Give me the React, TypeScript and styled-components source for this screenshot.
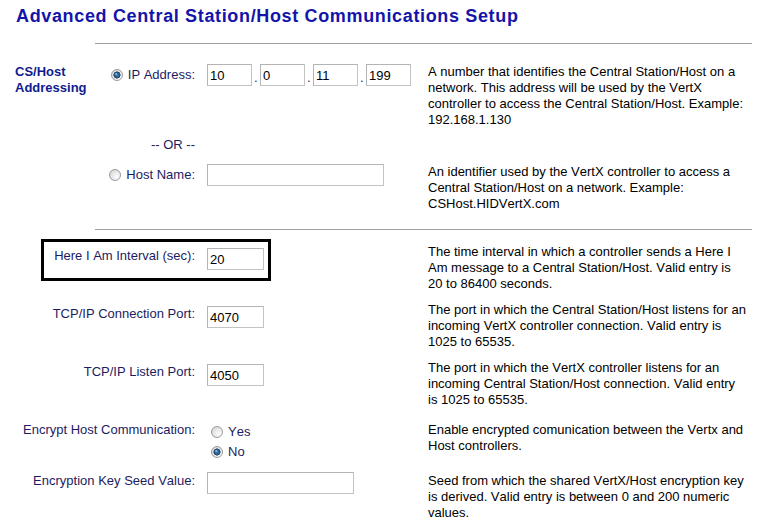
import React from "react";
import styled, { createGlobalStyle } from "styled-components";

const navy = "#1c1c62";

const GlobalStyle = createGlobalStyle`
  body {
    margin: 0;
    background: #fff;
    font-family: "Liberation Sans", Arial, sans-serif;
    font-size: 13px;
    line-height: 16px;
    font-kerning: none;
    color: #000;
  }
`;

const Page = styled.div`
  width: 762px;
  box-sizing: border-box;
  padding: 5px 10px 0 15px;
`;

const Title = styled.h1`
  margin: 0 0 0 1px;
  font-size: 18px;
  line-height: 22px;
  font-weight: bold;
  letter-spacing: 0.65px;
  color: #1414aa;
`;

const Rule = styled.hr<{ $top: number }>`
  margin: ${(p) => p.$top}px 0 0 80px;
  border: 0;
  height: 1px;
  background: #a0a0a0;
`;

const Row = styled.div<{ $top: number }>`
  position: relative;
  display: grid;
  grid-template-columns: 192px 221px 319px;
  align-items: start;
  margin-top: ${(p) => p.$top}px;
`;

const LabelCell = styled.div<{ $pad?: number; $split?: boolean }>`
  display: flex;
  justify-content: ${(p) => (p.$split ? "space-between" : "flex-end")};
  align-items: flex-start;
  padding: ${(p) => p.$pad ?? 0}px 12px 0 0;
  color: ${navy};
  white-space: nowrap;
`;

const SectionHeading = styled.div`
  font-weight: bold;
  color: #0f1c8e;
  white-space: normal;
  width: 80px;
`;

const RadioLabel = styled.label`
  display: flex;
  align-items: center;
  gap: 5px;
  height: 22px;
  line-height: 20px;
  color: ${navy};
`;

const ControlCell = styled.div<{ $pad?: number }>`
  display: flex;
  flex-direction: column;
  align-items: flex-start;
  padding-top: ${(p) => p.$pad ?? 0}px;
`;

const IpGroup = styled.div`
  display: flex;
  align-items: flex-end;
`;

const Dot = styled.span`
  width: 8px;
  padding-left: 2px;
  box-sizing: border-box;
  line-height: 16px;
  color: ${navy};
`;

const TextBox = styled.input<{ $w: number }>`
  width: ${(p) => p.$w}px;
  height: 22px;
  box-sizing: border-box;
  margin: 0;
  padding: 0 2px;
  border: 1px solid #c3c3c3;
  border-top-color: #b4b4b4;
  border-left-color: #b4b4b4;
  background: #fff;
  font-family: "Liberation Sans", Arial, sans-serif;
  font-size: 13px;
  color: #000;
  outline: none;
`;

const Radio = styled.input`
  appearance: none;
  width: 12px;
  height: 12px;
  margin: 0;
  border-radius: 50%;
  border: 1px solid #9a9a9a;
  box-sizing: border-box;
  background: radial-gradient(circle at 70% 70%, #ffffff 0, #ececec 40%, #cfcfcf 100%);
  flex: none;

  &:checked {
    background:
      radial-gradient(circle at 42% 40%, #c8ecff 0, rgba(200, 236, 255, 0) 1.4px),
      radial-gradient(circle at 50% 50%, #3f86bd 0, #24598a 2.4px, #1b3f66 3.3px, rgba(27, 63, 102, 0) 3.8px),
      radial-gradient(circle at 70% 70%, #ffffff 0, #ececec 40%, #cfcfcf 100%);
  }
`;

const Option = styled.label`
  display: flex;
  align-items: center;
  gap: 5px;
  height: 20px;
  line-height: 20px;
  margin-left: 4px;
  color: ${navy};
`;

const DescCell = styled.div<{ $pad?: number }>`
  padding-top: ${(p) => p.$pad ?? 0}px;
  color: #000;
`;

const Highlight = styled.div`
  position: absolute;
  left: 26px;
  top: -5px;
  width: 230px;
  height: 42px;
  box-sizing: border-box;
  border: 3px solid #000;
  pointer-events: none;
`;

type FieldRow = {
  top: number;
  label: string;
  value: string;
  width: number;
  labelPad: number;
  controlPad: number;
  descPad: number;
  desc: string;
  boxed?: boolean;
};

const fieldRows: FieldRow[] = [
  {
    top: 14,
    label: "Here I Am Interval (sec):",
    value: "20",
    width: 57,
    labelPad: 4,
    controlPad: 4,
    descPad: 0,
    desc: "The time interval in which a controller sends a Here I Am message to a Central Station/Host. Valid entry is 20 to 86400 seconds.",
    boxed: true,
  },
  {
    top: 10,
    label: "TCP/IP Connection Port:",
    value: "4070",
    width: 57,
    labelPad: 4,
    controlPad: 4,
    descPad: 0,
    desc: "The port in which the Central Station/Host listens for an incoming VertX controller connection. Valid entry is 1025 to 65535.",
  },
  {
    top: 10,
    label: "TCP/IP Listen Port:",
    value: "4050",
    width: 57,
    labelPad: 4,
    controlPad: 4,
    descPad: 0,
    desc: "The port in which the VertX controller listens for an incoming Central Station/Host connection. Valid entry is 1025 to 65535.",
  },
];

export default function App() {
  const ip = ["10", "0", "11", "199"];

  return (
    <>
      <GlobalStyle />
      <Page>
        <Title>Advanced Central Station/Host Communications Setup</Title>
        <Rule $top={16} />

        <Row $top={20}>
          <LabelCell $split>
            <SectionHeading>CS/Host Addressing</SectionHeading>
            <RadioLabel>
              <Radio type="radio" name="addr" defaultChecked />
              IP Address:
            </RadioLabel>
          </LabelCell>
          <ControlCell>
            <IpGroup>
              {ip.map((part, i) => (
                <React.Fragment key={i}>
                  <TextBox $w={45} defaultValue={part} />
                  {i < ip.length - 1 && <Dot>.</Dot>}
                </React.Fragment>
              ))}
            </IpGroup>
          </ControlCell>
          <DescCell>
            A number that identifies the Central Station/Host on a network. This address will
            be used by the VertX controller to access the Central Station/Host. Example:
            192.168.1.130
          </DescCell>
        </Row>

        <Row $top={9}>
          <LabelCell>-- OR --</LabelCell>
        </Row>

        <Row $top={11}>
          <LabelCell>
            <RadioLabel>
              <Radio type="radio" name="addr" />
              Host Name:
            </RadioLabel>
          </LabelCell>
          <ControlCell>
            <TextBox $w={177} defaultValue="" />
          </ControlCell>
          <DescCell>
            An identifier used by the VertX controller to access a Central Station/Host on a
            network. Example: CSHost.HIDVertX.com
          </DescCell>
        </Row>

        <Rule $top={17} />

        {fieldRows.map((r) => (
          <Row $top={r.top} key={r.label}>
            <LabelCell $pad={r.labelPad}>{r.label}</LabelCell>
            <ControlCell $pad={r.controlPad}>
              <TextBox $w={r.width} defaultValue={r.value} />
            </ControlCell>
            <DescCell $pad={r.descPad}>{r.desc}</DescCell>
            {r.boxed && <Highlight />}
          </Row>
        ))}

        <Row $top={14}>
          <LabelCell>Encrypt Host Communication:</LabelCell>
          <ControlCell>
            <Option>
              <Radio type="radio" name="encrypt" />
              Yes
            </Option>
            <Option>
              <Radio type="radio" name="encrypt" defaultChecked />
              No
            </Option>
          </ControlCell>
          <DescCell>Enable encrypted comunication between the Vertx and Host controllers.</DescCell>
        </Row>

        <Row $top={10}>
          <LabelCell $pad={1}>Encryption Key Seed Value:</LabelCell>
          <ControlCell>
            <TextBox $w={147} defaultValue="" />
          </ControlCell>
          <DescCell $pad={1}>
            Seed from which the shared VertX/Host encryption key is derived. Valid entry is
            between 0 and 200 numeric values.
          </DescCell>
        </Row>
      </Page>
    </>
  );
}
